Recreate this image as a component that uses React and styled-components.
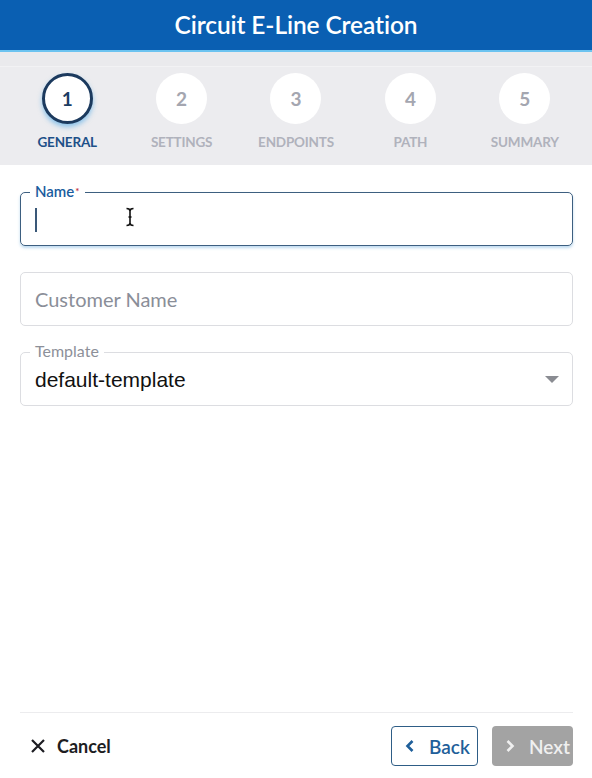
import React from "react";
import styled, { createGlobalStyle } from "styled-components";

const GlobalStyle = createGlobalStyle`
  html, body {
    margin: 0;
    padding: 0;
    background: #ffffff;
  }
  body {
    font-family: Lato, "Open Sans", sans-serif;
  }
  * {
    box-sizing: border-box;
  }
`;

const steps = [
  { num: 1, label: "General" },
  { num: 2, label: "Settings" },
  { num: 3, label: "Endpoints" },
  { num: 4, label: "Path" },
  { num: 5, label: "Summary" }
];

const ChevronLeft = () => (
  <svg width="12" height="14" viewBox="0 0 12 14">
    <path d="M8.5 2 L3.5 7 L8.5 12" fill="none" stroke="currentColor" strokeWidth="2.6" />
  </svg>
);

const ChevronRight = () => (
  <svg width="12" height="14" viewBox="0 0 12 14">
    <path d="M3.5 2 L8.5 7 L3.5 12" fill="none" stroke="currentColor" strokeWidth="2.6" />
  </svg>
);

const CloseIcon = () => (
  <svg width="16" height="16" viewBox="0 0 16 16">
    <path d="M2 2 L14 14 M14 2 L2 14" fill="none" stroke="currentColor" strokeWidth="2.2" />
  </svg>
);

const IBeam = () => (
  <svg width="10" height="20" viewBox="0 0 10 20">
    <path
      d="M1.5 1.5 Q5 1.5 5 4 Q5 1.5 8.5 1.5 M5 4 V16 M1.5 18.5 Q5 18.5 5 16 Q5 18.5 8.5 18.5 M3.5 10 H6.5"
      fill="none"
      stroke="#111"
      strokeWidth="1.6"
    />
  </svg>
);

export default function App() {
  return (
    <Page>
      <GlobalStyle />
      <Header>
        <Title>Circuit E-Line Creation</Title>
      </Header>

      <Stepper>
        {steps.map((s, i) => (
          <Step key={s.num}>
            <Circle active={i === 0}>{s.num}</Circle>
            <StepLabel active={i === 0}>{s.label}</StepLabel>
          </Step>
        ))}
      </Stepper>

      <Form>
        <Field focused>
          <Legend focused>
            Name<Required>*</Required>
          </Legend>
          <Caret />
          <Pointer>
            <IBeam />
          </Pointer>
        </Field>

        <Field>
          <Placeholder>Customer Name</Placeholder>
        </Field>

        <Field>
          <Legend>Template</Legend>
          <SelectValue>default-template</SelectValue>
          <Arrow />
        </Field>
      </Form>

      <Footer>
        <CancelButton>
          <CloseIcon />
          Cancel
        </CancelButton>
        <NavButtons>
          <NavButton>
            <ChevronLeft />
            Back
          </NavButton>
          <NavButton disabled>
            <ChevronRight />
            Next
          </NavButton>
        </NavButtons>
      </Footer>
    </Page>
  );
}

const Page = styled.div`
  width: 592px;
  height: 778px;
  display: flex;
  flex-direction: column;
  background: #ffffff;
  overflow: hidden;
`;

const Header = styled.div`
  height: 52px;
  background: #0a5fb2;
  border-bottom: 2px solid #6cc3f0;
  display: flex;
  align-items: center;
  justify-content: center;
`;

const Title = styled.div`
  color: #ffffff;
  font-size: 24.5px;
  font-weight: 600;
  letter-spacing: -0.1px;
  margin-top: -1px;
`;

const Stepper = styled.div`
  height: 113px;
  background: #ececef;
  border-top: 14px solid #eaeaed;
  box-shadow: inset 0 1px 0 #f2f2f4;
  display: grid;
  grid-template-columns: repeat(5, 1fr);
  padding: 7px 10px 0;
`;

const Step = styled.div`
  display: flex;
  flex-direction: column;
  align-items: center;
`;

const Circle = styled.div`
  width: 51px;
  height: 51px;
  border-radius: 50%;
  background: #ffffff;
  display: flex;
  align-items: center;
  justify-content: center;
  font-size: 19px;
  font-weight: 700;
  color: ${p => (p.active ? "#1c3d63" : "#a4a6b0")};
  border: ${p => (p.active ? "3px solid #1c3a5e" : "none")};
  box-shadow: ${p => (p.active ? "0 3px 5px rgba(60, 160, 230, 0.55)" : "none")};
`;

const StepLabel = styled.div`
  margin-top: 10px;
  font-size: 13.5px;
  font-weight: 700;
  text-transform: uppercase;
  letter-spacing: -0.2px;
  color: ${p => (p.active ? "#1e5088" : "#b0b2bc")};
`;

const Form = styled.div`
  flex: 1;
  display: flex;
  flex-direction: column;
  gap: 26px;
  padding: 27px 19px 0 20px;
`;

const Field = styled.div`
  position: relative;
  height: 54px;
  border-radius: 5px;
  border: ${p => (p.focused ? "1.5px solid #3d5f80" : "1px solid #dcdde1")};
  box-shadow: ${p => (p.focused ? "0 2px 3px rgba(70, 150, 210, 0.35)" : "none")};
  display: flex;
  align-items: center;
  padding: 0 14px;
`;

const Legend = styled.div`
  position: absolute;
  top: -11px;
  left: 9px;
  padding: 0 5px;
  background: #ffffff;
  font-size: ${p => (p.focused ? "15px" : "16px")};
  line-height: 18px;
  font-weight: ${p => (p.focused ? 600 : 400)};
  color: ${p => (p.focused ? "#1a5c9e" : "#8d9099")};
`;

const Required = styled.span`
  color: #c0323a;
  font-size: 10px;
  vertical-align: top;
  margin-left: 1px;
`;

const Caret = styled.div`
  width: 1.5px;
  height: 24px;
  background: #3a5878;
  margin-top: 2px;
`;

const Pointer = styled.div`
  position: absolute;
  left: 104px;
  top: 14px;
  display: flex;
`;

const Placeholder = styled.div`
  font-size: 20px;
  color: #8a8e98;
`;

const SelectValue = styled.div`
  flex: 1;
  font-family: "Liberation Sans", Arial, sans-serif;
  font-size: 21px;
  color: #111111;
  margin-top: 2px;
`;

const Arrow = styled.div`
  width: 0;
  height: 0;
  border-left: 7px solid transparent;
  border-right: 7px solid transparent;
  border-top: 7px solid #8a8c92;
  margin-right: -1px;
`;

const Footer = styled.div`
  margin: 0 19px 12px 20px;
  border-top: 1px solid #ececee;
  padding-top: 13px;
  display: flex;
  align-items: center;
  justify-content: space-between;
`;

const CancelButton = styled.div`
  display: flex;
  align-items: center;
  gap: 11px;
  padding-left: 10px;
  font-size: 18px;
  font-weight: 700;
  color: #1d1d22;
`;

const NavButtons = styled.div`
  display: flex;
  gap: 14px;
`;

const NavButton = styled.div`
  height: 40px;
  display: flex;
  align-items: center;
  gap: 13px;
  padding: 0 0 0 12px;
  border-radius: 4px;
  font-size: 19px;
  font-weight: 600;
  border: ${p => (p.disabled ? "none" : "1.5px solid #2e5d86")};
  background: ${p => (p.disabled ? "#a3a3a3" : "#ffffff")};
  color: ${p => (p.disabled ? "#f0f0f0" : "#1f5f9a")};
  width: ${p => (p.disabled ? "81px" : "87px")};
`;
